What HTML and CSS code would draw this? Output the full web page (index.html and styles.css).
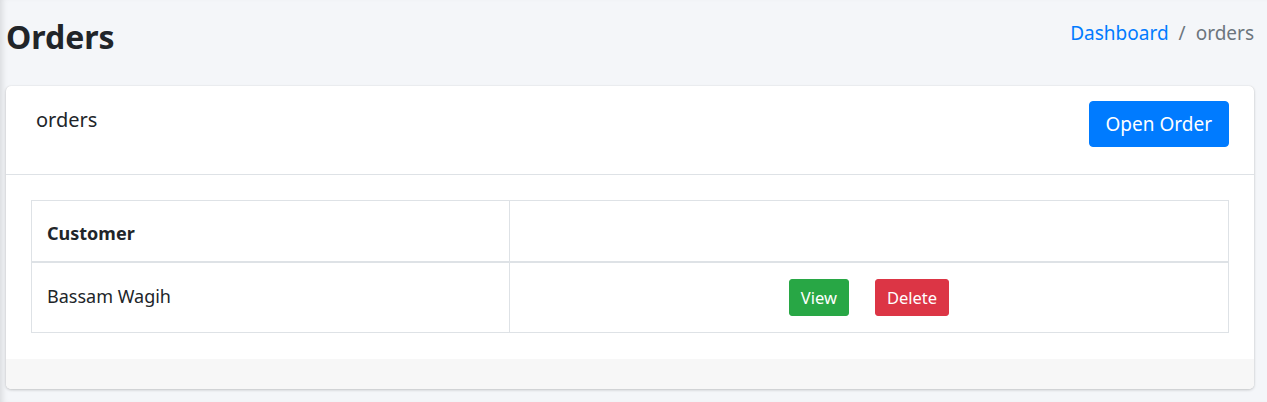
FILE: index.html
```html
<!DOCTYPE html>
<html>
<head>
<meta charset="utf-8">
<link rel="stylesheet" href="styles.css">
</head>
<body>
<div class="wrapper">
  <div class="content-header">
    <h1 class="page-title">Orders</h1>
    <ol class="breadcrumb">
      <li><a href="#">Dashboard</a></li>
      <li class="sep">/</li>
      <li class="active">orders</li>
    </ol>
  </div>
  <div class="card">
    <div class="card-header">
      <h3 class="card-title">orders</h3>
      <a class="btn btn-primary" href="#">Open Order</a>
    </div>
    <div class="card-body">
      <table class="table">
        <thead>
          <tr><th class="col-customer">Customer</th><th></th></tr>
        </thead>
        <tbody>
          <tr>
            <td class="text-cell">Bassam Wagih</td>
            <td class="action-cell"><div class="actions"><a class="btn btn-sm btn-success" href="#">View</a><a class="btn btn-sm btn-danger" href="#">Delete</a></div></td>
          </tr>
        </tbody>
      </table>
    </div>
    <div class="card-footer"></div>
  </div>
</div>
</body>
</html>
```
FILE: styles.css
```css
* { box-sizing: border-box; }
html, body { margin: 0; padding: 0; }
body {
  background: #f4f6f9;
  font-family: "Noto Sans", "Open Sans", sans-serif;
  color: #212529;
  width: 1267px;
  height: 402px;
  overflow: hidden;
}
.wrapper {
  min-height: 402px;
  padding: 0 13px 0 6px;
  box-shadow: inset 6px 0 6px -4px rgba(0,0,0,0.12);
}
.content-header {
  display: flex;
  justify-content: space-between;
  align-items: flex-start;
  padding: 13px 0 0 0;
  height: 86px;
}
.page-title {
  margin: 0;
  font-size: 32px;
  font-weight: 700;
  line-height: 48px;
  color: #212529;
}
.breadcrumb {
  display: flex;
  list-style: none;
  margin: 0;
  padding: 5px 0 0;
  font-size: 19px;
  line-height: 30px;
}
.breadcrumb a { color: #007bff; text-decoration: none; }
.breadcrumb .sep { color: #6c757d; padding: 0 10px; }
.breadcrumb .active { color: #6c757d; }
.card {
  background: #fff;
  border-radius: 5px;
  box-shadow: 0 0 1px rgba(0,0,0,.125), 0 1px 3px rgba(0,0,0,.2);
  overflow: hidden;
}
.card-header {
  display: flex;
  justify-content: space-between;
  align-items: flex-start;
  padding: 15px 25px 27px 30px;
  border-bottom: 1px solid #dee2e6;
}
.card-title {
  margin: 4px 0 0;
  font-size: 20px;
  font-weight: 400;
  line-height: 30px;
  color: #212529;
}
.btn {
  display: inline-block;
  text-decoration: none;
  color: #fff;
  border: 1px solid transparent;
  border-radius: 4px;
  font-size: 19px;
  line-height: 30px;
  padding: 7px 16px;
}
.btn-primary { background: #007bff; border-color: #007bff; }
.btn-sm { font-size: 16.5px; line-height: 25px; padding: 5px 11px; border-radius: 3px; }
.btn-success { background: #28a745; border-color: #28a745; }
.btn-danger { background: #dc3545; border-color: #dc3545; }
.card-body { padding: 25px 25px 26px; }
.table {
  width: 100%;
  border-collapse: collapse;
  border: 1px solid #dee2e6;
}
.table th, .table td {
  border: 1px solid #dee2e6;
  padding: 19px 15px 14px;
  text-align: left;
  vertical-align: top;
  font-size: 18px;
  line-height: 27px;
}
.table thead th { border-bottom: 2px solid #dee2e6; font-weight: 700; }
.table td.text-cell { padding: 20px 15px 12px; }
.table td.action-cell { padding: 16px 15px; }
.col-customer { width: 478px; }
.actions {
  display: flex;
  justify-content: center;
  gap: 26px;
}
.card-footer {
  height: 30px;
  background: #f7f7f7;
}
```
